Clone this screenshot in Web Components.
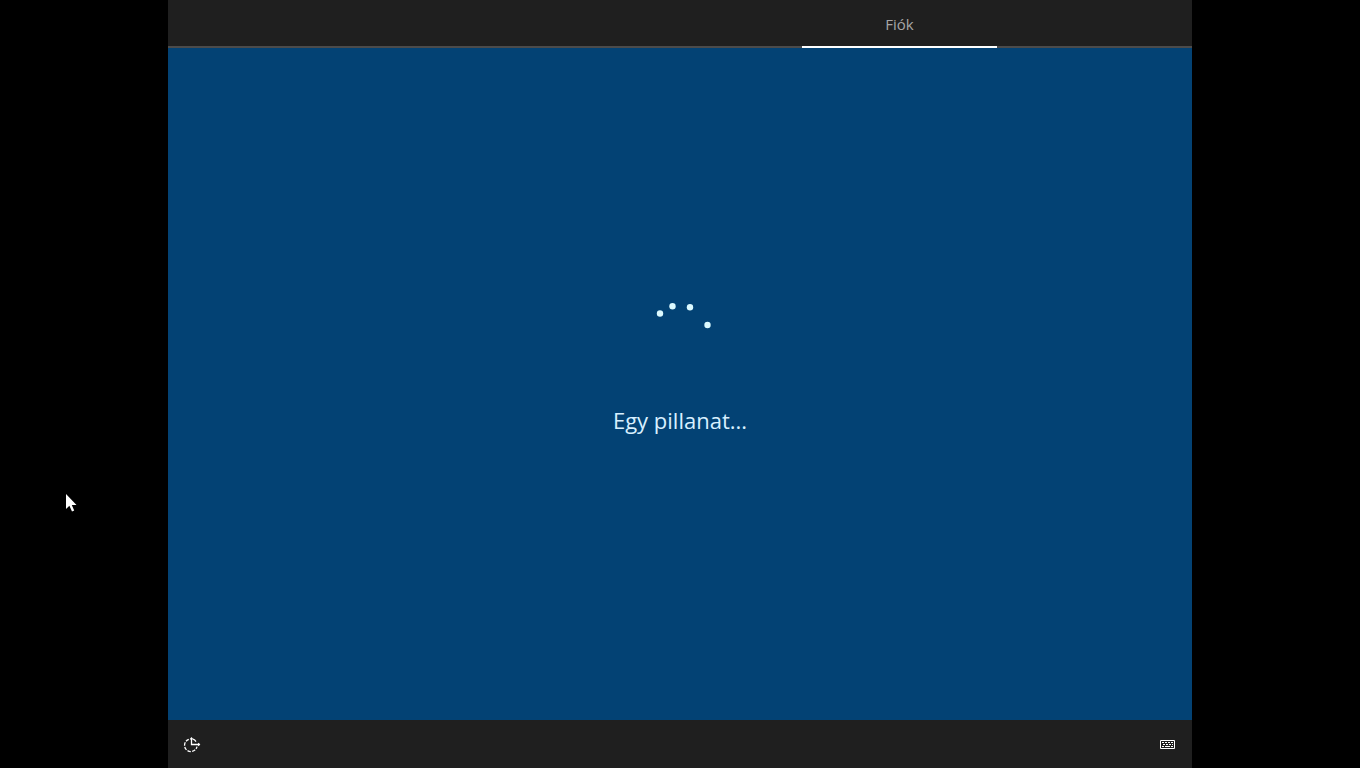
<!DOCTYPE html>
<html lang="hu">
<head>
  <meta charset="utf-8">
  <meta name="viewport" content="width=device-width, initial-scale=1">
  <title>Fiók</title>
  <style>
    html, body {
      height: 100%;
      margin: 0;
      background: #000;
      overflow: hidden;
    }

    body {
      font-family: "Segoe UI", "Open Sans", "Noto Sans", sans-serif;
    }
  </style>
</head>
<body>
  <setup-screen>
    <setup-tabs slot="header">Fiók</setup-tabs>
    <progress-message>Egy pillanat...</progress-message>
    <setup-toolbar slot="footer"></setup-toolbar>
  </setup-screen>
  <mouse-pointer></mouse-pointer>

  <script>
    // 4:3 screen, centred in the window
    class SetupScreen extends HTMLElement {
      constructor() {
        super();
        this.attachShadow({ mode: 'open' });
        this.shadowRoot.innerHTML = `
          <style>
            :host {
              display: flex;
              flex-direction: column;
              height: 100vh;
              aspect-ratio: 4 / 3;
              max-width: 100%;
              margin: 0 auto;
              background: #034274;
            }

            main {
              flex: 1;
              display: grid;
              place-items: center;
            }
          </style>
          <slot name="header"></slot>
          <main><slot></slot></main>
          <slot name="footer"></slot>
        `;
      }
    }

    class SetupTabs extends HTMLElement {
      constructor() {
        super();
        this.attachShadow({ mode: 'open' });
        this.shadowRoot.innerHTML = `
          <style>
            :host {
              display: block;
              background: linear-gradient(#4b4b4b, #4b4b4b) bottom / 100% 2px no-repeat #1f1f1f;
            }

            nav {
              display: grid;
              grid-template-columns: 13fr 4fr 4fr;
              height: 48px;
            }

            button {
              grid-column: 2;
              padding: 2px 0 0;
              border: 0;
              border-bottom: 2px solid #fff;
              background: none;
              color: #a6a6a6;
              font: inherit;
              font-size: 15px;
              line-height: 20px;
            }
          </style>
          <nav><button type="button" aria-current="step"><slot></slot></button></nav>
        `;
      }
    }

    class ProgressMessage extends HTMLElement {
      constructor() {
        super();
        this.attachShadow({ mode: 'open' });
        this.shadowRoot.innerHTML = `
          <style>
            :host {
              display: flex;
              flex-direction: column;
              align-items: center;
              gap: 38px;
              padding-bottom: 30px;
              color: #d8f0ff;
            }

            svg {
              width: 64px;
              height: 64px;
              fill: #dcfaff;
            }

            p {
              margin: 0;
              font-size: 22px;
              line-height: 32px;
            }
          </style>
          <svg viewBox="0 0 64 64" aria-hidden="true">
            <circle cx="12" cy="11.5" r="3.2"/>
            <circle cx="24.5" cy="4.3" r="3.2"/>
            <circle cx="42" cy="5.2" r="3.2"/>
            <circle cx="59.5" cy="23" r="3.2"/>
          </svg>
          <p role="status"><slot></slot></p>
        `;
      }
    }

    class SetupToolbar extends HTMLElement {
      constructor() {
        super();
        this.attachShadow({ mode: 'open' });
        this.shadowRoot.innerHTML = `
          <style>
            :host {
              display: flex;
              justify-content: space-between;
              align-items: center;
              height: 48px;
              background: #1f1f1f;
            }

            button {
              display: grid;
              place-items: center;
              width: 48px;
              height: 48px;
              padding: 0;
              border: 0;
              background: none;
              color: #fff;
            }

            svg {
              width: 18px;
              height: 18px;
              fill: none;
              stroke: currentColor;
            }
          </style>
          <button type="button" aria-label="Könnyű kezelés">
            <svg viewBox="0 0 18 18" stroke-width="1.3">
              <path d="M5.8 4.3A6.3 6.3 0 1 0 14 11.6" stroke-dasharray="3.4 1.3"/>
              <path d="M10 4.2A6.3 6.3 0 0 1 13 6.6"/>
              <path d="M8.5 3v6.5H16M7.3 4.4L8.5 3l1.2 1.4M15.2 8.3l1.2 1.2-1.2 1.2"/>
            </svg>
          </button>
          <button type="button" aria-label="Billentyűzet">
            <svg viewBox="0 0 18 18">
              <path d="M1.5 5.5h14v8h-14z"/>
              <path d="M3 7.5h11" stroke-dasharray="2 1"/>
              <path d="M4 9.5h10" stroke-dasharray="2 1"/>
              <path d="M3 11.5h2M6 11.5h5M12 11.5h2"/>
            </svg>
          </button>
        `;
      }
    }

    class MousePointer extends HTMLElement {
      constructor() {
        super();
        this.attachShadow({ mode: 'open' });
        this.shadowRoot.innerHTML = `
          <style>
            :host {
              position: absolute;
              left: 65px;
              top: 493px;
              pointer-events: none;
            }

            svg {
              display: block;
              width: 12px;
              height: 19px;
              fill: #fff;
            }
          </style>
          <svg viewBox="0 0 12 19" aria-hidden="true">
            <path d="M1 1v15l3.4-3.2L7 18.5l2.2-1L6.8 12h4.7z"/>
          </svg>
        `;
      }
    }

    customElements.define('setup-screen', SetupScreen);
    customElements.define('setup-tabs', SetupTabs);
    customElements.define('progress-message', ProgressMessage);
    customElements.define('setup-toolbar', SetupToolbar);
    customElements.define('mouse-pointer', MousePointer);
  </script>
</body>
</html>
